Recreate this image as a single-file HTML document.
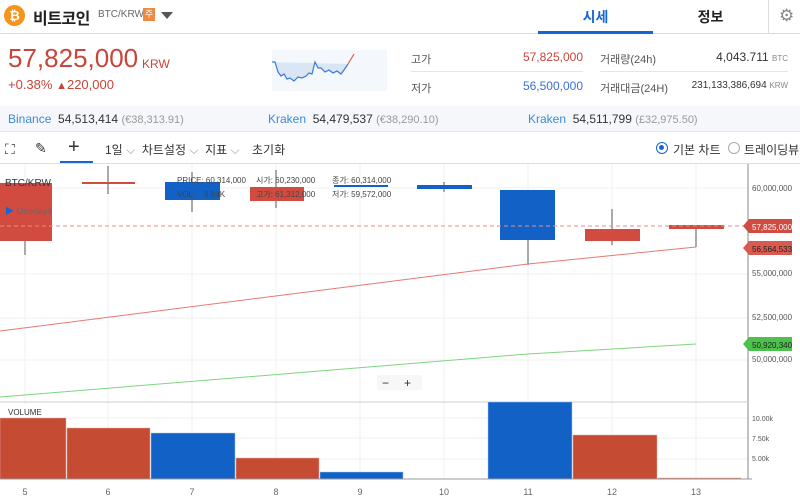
<!DOCTYPE html><html><head><meta charset="utf-8"><style>
*{margin:0;padding:0;box-sizing:border-box}
body{width:800px;height:503px;overflow:hidden;background:#fff;font-family:"Liberation Sans","Noto Sans CJK KR",sans-serif;position:relative;color:#333}
.a{position:absolute;white-space:nowrap}
</style></head><body>
<div class="a" style="left:4px;top:5px;width:21px;height:21px;border-radius:50%;background:#f7931a;color:#fff;font-size:13px;font-weight:bold;text-align:center;line-height:21px">₿</div>
<div class="a" style="left:33px;top:5px;font-size:16px;font-weight:bold;color:#222;letter-spacing:-0.5px">비트코인</div>
<div class="a" style="left:98px;top:9px;font-size:10px;color:#666">BTC/KRW</div>
<div class="a" style="left:143px;top:8px;width:12px;height:13px;background:#f0883e;color:#fff;font-size:9px;text-align:center;line-height:13px">주</div>
<div class="a" style="left:161px;top:12px;width:0;height:0;border-left:6px solid transparent;border-right:6px solid transparent;border-top:7px solid #555"></div>
<div class="a" style="left:0;top:33px;width:800px;height:1px;background:#ddd"></div>
<div class="a" style="left:538px;top:7px;width:115px;text-align:center;font-size:14px;font-weight:bold;color:#1565d8">시세</div>
<div class="a" style="left:538px;top:31px;width:115px;height:3px;background:#1565d8"></div>
<div class="a" style="left:653px;top:7px;width:115px;text-align:center;font-size:14px;font-weight:bold;color:#222">정보</div>
<div class="a" style="left:768px;top:0;width:1px;height:33px;background:#ddd"></div>
<div class="a" style="left:779px;top:6px;font-size:17px;color:#888">⚙</div>

<div class="a" style="left:8px;top:43px;font-size:26px;color:#c8453a">57,825,000</div>
<div class="a" style="left:142px;top:57px;font-size:12px;color:#c8453a">KRW</div>
<div class="a" style="left:8px;top:77px;font-size:13px;color:#c8453a">+0.38% <span style="font-size:11px">▲</span>220,000</div>
<svg class="a" style="left:272px;top:50px" width="115" height="41"><rect width="115" height="41" fill="#f4f7fb"/><path d="M0 12 L3 12 L6 22 L9 26 L12 24 L15 29 L18 28 L22 31 L26 27 L30 28 L34 26 L37 23 L40 24 L43 12 L46 18 L49 18 L53 22 L57 20 L61 23 L65 21 L69 24 L72 20 L74 17 L76 14" fill="#dbe6f4" stroke="#3a7ad6" stroke-width="1.2"/><path d="M76 14 L79 9 L82 4" stroke="#e05d4d" stroke-width="1.2" fill="none"/></svg>
<div class="a" style="left:411px;top:51px;font-size:11px;color:#555">고가</div>
<div class="a" style="left:470px;top:50px;width:113px;text-align:right;font-size:12px;color:#c8453a">57,825,000</div>
<div class="a" style="left:411px;top:71px;width:172px;height:1px;background:#e5e5e5"></div>
<div class="a" style="left:411px;top:80px;font-size:11px;color:#555">저가</div>
<div class="a" style="left:470px;top:79px;width:113px;text-align:right;font-size:12px;color:#3a6fd0">56,500,000</div>
<div class="a" style="left:600px;top:51px;font-size:11px;color:#555">거래량(24h)</div>
<div class="a" style="left:660px;top:50px;width:128px;text-align:right;font-size:12px;color:#333">4,043.711 <span style="font-size:8px;color:#888">BTC</span></div>
<div class="a" style="left:600px;top:71px;width:188px;height:1px;background:#e5e5e5"></div>
<div class="a" style="left:600px;top:80px;font-size:11px;color:#555">거래대금(24H)</div>
<div class="a" style="left:660px;top:80px;width:128px;text-align:right;font-size:10px;color:#333">231,133,386,694 <span style="font-size:8px;color:#888">KRW</span></div>

<div class="a" style="left:0;top:106px;width:800px;height:26px;background:#f5f7fa;border-bottom:1px solid #e5e5e5"></div>
<div class="a" style="left:8px;top:112px;font-size:12px"><span style="color:#3c8ad8">Binance</span>&nbsp; <span style="color:#333">54,513,414</span> <span style="color:#999;font-size:11px">(€38,313.91)</span></div>
<div class="a" style="left:268px;top:112px;font-size:12px"><span style="color:#3c8ad8">Kraken</span>&nbsp; <span style="color:#333">54,479,537</span> <span style="color:#999;font-size:11px">(€38,290.10)</span></div>
<div class="a" style="left:528px;top:112px;font-size:12px"><span style="color:#3c8ad8">Kraken</span>&nbsp; <span style="color:#333">54,511,799</span> <span style="color:#999;font-size:11px">(£32,975.50)</span></div>

<div class="a" style="left:5px;top:141px;font-size:14px;color:#333">⛶</div>
<div class="a" style="left:35px;top:140px;font-size:14px;color:#333">✎</div>
<div class="a" style="left:68px;top:136px;font-size:20px;color:#333;font-weight:300">+</div>
<div class="a" style="left:60px;top:161px;width:33px;height:2px;background:#1565d8"></div>
<div class="a" style="left:105px;top:141px;font-size:12px;color:#333">1일 <span style="color:#999">⌵</span>&nbsp; 차트설정 <span style="color:#999">⌵</span>&nbsp; 지표 <span style="color:#999">⌵</span></div>
<div class="a" style="left:252px;top:141px;font-size:12px;color:#333">초기화</div>
<div class="a" style="left:656px;top:142px;width:12px;height:12px;border-radius:50%;border:1.5px solid #1565d8"><div style="margin:2px;width:5px;height:5px;border-radius:50%;background:#1565d8"></div></div>
<div class="a" style="left:673px;top:141px;font-size:12px;color:#333">기본 차트</div>
<div class="a" style="left:728px;top:142px;width:12px;height:12px;border-radius:50%;border:1px solid #aaa"></div>
<div class="a" style="left:744px;top:141px;font-size:12px;color:#333">트레이딩뷰</div>
<div class="a" style="left:0;top:163px;width:800px;height:1px;background:#ddd"></div>

<svg class="a" style="left:0;top:164px" width="800" height="339" font-family="Liberation Sans, Noto Sans CJK KR, sans-serif">
<g stroke="#f0f0f0" stroke-width="1">
<path d="M25 0V315M108 0V315M192 0V315M276 0V315M360 0V315M444 0V315M528 0V315M612 0V315M696 0V315"/>
<path d="M0 24H748M0 110H748M0 154H748M0 196H748M0 254H748M0 274H748M0 295H748"/>
</g>
<g stroke="#555" stroke-width="1">
<path d="M25 77V91M108 2V30M192 8V48M276 6V44M444 18V28M528 26V101M612 45V81M696 65V83"/>
</g>
<g fill="#d14b41"><rect x="0" y="19" width="52" height="58"/><rect x="82" y="18" width="53" height="2"/><rect x="250" y="23" width="54" height="14"/><rect x="585" y="65" width="55" height="12"/><rect x="669" y="61" width="55" height="4"/></g>
<g fill="#1261c7"><rect x="165" y="18" width="55" height="18"/><rect x="334" y="21" width="54" height="2"/><rect x="417" y="21" width="55" height="4"/><rect x="500" y="26" width="55" height="50"/></g>
<path d="M0 62H748" stroke="#ee8a80" stroke-dasharray="4,3"/>
<path d="M0 167L528 100L696 83" stroke="#e57a72" stroke-width="1" fill="none"/>
<path d="M0 233L528 190L696 180" stroke="#7ed67e" stroke-width="1" fill="none"/>
<text x="5" y="22" font-size="10" fill="#333">BTC/KRW</text>
<text x="5" y="50" font-size="9" fill="#1565d8">▶ <tspan fill="#666">Overlays</tspan></text>
<g font-size="8" fill="#444"><text x="177" y="19">PRICE: 60,314,000</text><text x="256" y="19">시가: 60,230,000</text><text x="332" y="19">종가: 60,314,000</text><text x="177" y="33">VOL:&#160;&#160;&#160; 8.84K</text><text x="256" y="33">고가: 61,312,000</text><text x="332" y="33">저가: 59,572,000</text></g>
<path d="M748 0V315" stroke="#888"/>
<g font-size="8" fill="#555"><text x="752" y="27">60,000,000</text><text x="752" y="112">55,000,000</text><text x="752" y="156">52,500,000</text><text x="752" y="198">50,000,000</text></g>
<path d="M743 62L749 55H792V69H749Z" fill="#d14b41"/><text x="752" y="66" font-size="8" fill="#fff">57,825,000</text>
<path d="M743 84L749 77H792V91H749Z" fill="#d95a50"/><text x="752" y="88" font-size="8" fill="#222">56,564,533</text>
<path d="M743 180L749 173H792V187H749Z" fill="#4cc24c"/><text x="752" y="184" font-size="8" fill="#222">50,920,340</text>
<rect x="377" y="211" width="45" height="15" rx="2" fill="#f7f7f7"/><text x="382" y="223" font-size="12" fill="#333">−</text><text x="404" y="223" font-size="12" fill="#333">+</text>
<path d="M0 238H748" stroke="#ccc"/>
<rect x="2" y="241" width="52" height="14" fill="#fff"/><text x="8" y="251" font-size="8" fill="#333">VOLUME</text>
<g fill="#c64b33" stroke="#e8b0a4" stroke-width="0.5"><rect x="0" y="254" width="66" height="61"/><rect x="67" y="264" width="83" height="51"/><rect x="236" y="294" width="83" height="21"/><rect x="573" y="271" width="84" height="44"/><rect x="658" y="314" width="83" height="1"/></g>
<g fill="#1261c7" stroke="#a8c4ec" stroke-width="0.5"><rect x="151" y="269" width="84" height="46"/><rect x="320" y="308" width="83" height="7"/><rect x="488" y="238" width="84" height="77"/></g>
<path d="M0 315H752" stroke="#999"/>
<g font-size="7" fill="#555"><text x="752" y="257">10.00k</text><text x="752" y="277">7.50k</text><text x="752" y="297">5.00k</text></g>
<g font-size="9" fill="#666" text-anchor="middle"><text x="25" y="331">5</text><text x="108" y="331">6</text><text x="192" y="331">7</text><text x="276" y="331">8</text><text x="360" y="331">9</text><text x="444" y="331">10</text><text x="528" y="331">11</text><text x="612" y="331">12</text><text x="696" y="331">13</text></g>
</svg>
</body></html>
